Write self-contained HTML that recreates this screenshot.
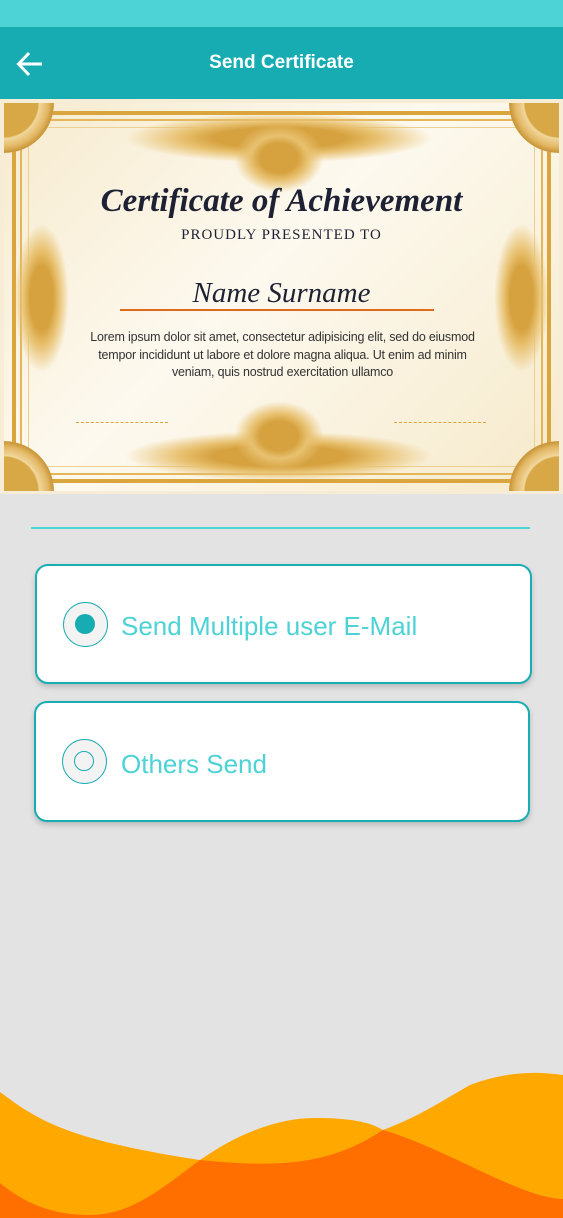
<!DOCTYPE html>
<html><head><meta charset="utf-8"><style>
*{margin:0;padding:0;box-sizing:border-box}
body{width:563px;height:1218px;background:#e3e3e3;position:relative;overflow:hidden;font-family:"Liberation Sans",sans-serif}
.status{position:absolute;left:0;top:0;width:563px;height:27px;background:#4dd2d6}
.hdr{position:absolute;left:0;top:27px;width:563px;height:72px;background:#16acb2}
.hdr h1{position:absolute;left:0;right:0;top:25px;text-align:center;color:#fff;font-size:19px;font-weight:bold}
.cert-wrap{position:absolute;left:0;top:99px;width:563px;height:395px;background:#f7ecd6}
.cert{position:absolute;left:4px;top:4px;width:555px;height:388px;background:linear-gradient(135deg,#f7ebcf,#fdf9ef 45%,#f6eacb);overflow:hidden}
.b1{position:absolute;left:8px;top:8px;right:8px;bottom:8px;border:4px solid #d9a53c}
.b2{position:absolute;left:16px;top:16px;right:16px;bottom:16px;border:2px solid #e2b659}
.b3{position:absolute;left:24px;top:24px;right:24px;bottom:24px;border:1px solid #ecd08f}
.corner{position:absolute;width:100px;height:100px;border-radius:50%;background:radial-gradient(circle,#d9a846 0 48%,#f0d79c 50%,#e3b866 62%,#c99536 70%,#f5e4bd 72%)}
.orn{position:absolute;background:radial-gradient(ellipse,#d6a23f 0 30%,#e8c170 45%,rgba(0,0,0,0) 70%)}
.t1{position:absolute;left:0;right:0;top:80px;text-align:center;font-family:"Liberation Serif",serif;font-style:italic;font-weight:bold;font-size:33px;color:#1d2133}
.t2{position:absolute;left:0;right:0;top:124px;text-align:center;font-family:"Liberation Serif",serif;font-size:15px;letter-spacing:1px;color:#1d2133}
.t3{position:absolute;left:0;right:0;top:174px;text-align:center;font-family:"Liberation Serif",serif;font-style:italic;font-size:29px;color:#1d2133}
.line{position:absolute;left:116px;width:314px;top:206px;height:2px;background:#e06a1c}
.t4{position:absolute;left:74px;right:72px;top:226px;text-align:center;font-size:12.5px;line-height:17.5px;color:#333;letter-spacing:-0.2px}
.dash{position:absolute;top:319px;width:92px;border-top:1px dashed #d9a53c}
.sep{position:absolute;left:31px;top:527px;width:499px;height:2px;background:#4dd2d6}
.card{position:absolute;background:#fff;border:2.5px solid #1aacb3;border-radius:13px;box-shadow:0 3px 6px rgba(0,0,0,.18)}
.radio{position:absolute;width:45px;height:45px;border-radius:50%;border:1.5px solid #1aacb3;background:#f3f3f3}
.lbl{position:absolute;font-size:26px;color:#4dd2d6}
</style></head><body>
<div class="status"></div>
<div class="hdr">
<svg style="position:absolute;left:16px;top:24px" width="28" height="26" viewBox="0 0 28 26"><path d="M26 13H3M13 2L2.5 13L13 24" fill="none" stroke="#fff" stroke-width="3"/></svg>
<h1>Send Certificate</h1></div>
<div class="cert-wrap"><div class="cert">
<div class="b1"></div><div class="b2"></div><div class="b3"></div>
<div class="corner" style="left:-50px;top:-50px"></div>
<div class="corner" style="right:-50px;top:-50px"></div>
<div class="corner" style="left:-50px;bottom:-50px"></div>
<div class="corner" style="right:-50px;bottom:-50px"></div>
<div class="orn" style="left:120px;top:10px;width:310px;height:50px"></div>
<div class="orn" style="left:230px;top:20px;width:90px;height:70px"></div>
<div class="orn" style="left:120px;bottom:10px;width:310px;height:50px"></div>
<div class="orn" style="left:230px;bottom:20px;width:90px;height:70px"></div>
<div class="orn" style="left:10px;top:120px;width:55px;height:150px"></div>
<div class="orn" style="right:10px;top:120px;width:55px;height:150px"></div>
<div class="t1">Certificate of Achievement</div>
<div class="t2">PROUDLY PRESENTED TO</div>
<div class="t3">Name Surname</div>
<div class="line"></div>
<div class="t4">Lorem ipsum dolor sit amet, consectetur adipisicing elit, sed do eiusmod tempor incididunt ut labore et dolore magna aliqua. Ut enim ad minim veniam, quis nostrud exercitation ullamco</div>
<div class="dash" style="left:72px"></div><div class="dash" style="left:390px"></div>
</div></div>
<div class="sep"></div>
<div class="card" style="left:35px;top:564px;width:497px;height:120px">
<div class="radio" style="left:26px;top:36px"><div style="position:absolute;left:11px;top:11px;width:20px;height:20px;border-radius:50%;background:#16acb2"></div></div>
<div class="lbl" style="left:84px;top:45px">Send Multiple user E-Mail</div></div>
<div class="card" style="left:34px;top:701px;width:496px;height:121px">
<div class="radio" style="left:26px;top:36px"><div style="position:absolute;left:11px;top:11px;width:20px;height:20px;border-radius:50%;border:1.5px solid #1aacb3"></div></div>
<div class="lbl" style="left:85px;top:46px">Others Send</div></div>
<svg style="position:absolute;left:0;top:1050px" width="563" height="168" viewBox="0 0 563 168">
<defs><clipPath id="ca"><path d="M0 42C40 72 70 90 200 110C280 118 330 115 383 80C420 66 440 52 470 35C510 20 540 22 563 25V168H0Z"/></clipPath></defs>
<path d="M0 42C40 72 70 90 200 110C280 118 330 115 383 80C420 66 440 52 470 35C510 20 540 22 563 25V168H0Z" fill="#ffa800"/>
<path d="M0 133C30 158 60 165 90 165C130 165 160 140 200 110C240 82 280 68 315 68C350 68 370 72 383 80C450 100 520 148 563 149V168H0Z" fill="#ffa800"/>
<path clip-path="url(#ca)" d="M0 133C30 158 60 165 90 165C130 165 160 140 200 110C240 82 280 68 315 68C350 68 370 72 383 80C450 100 520 148 563 149V168H0Z" fill="#ff6f00"/>
</svg>
</body></html>
